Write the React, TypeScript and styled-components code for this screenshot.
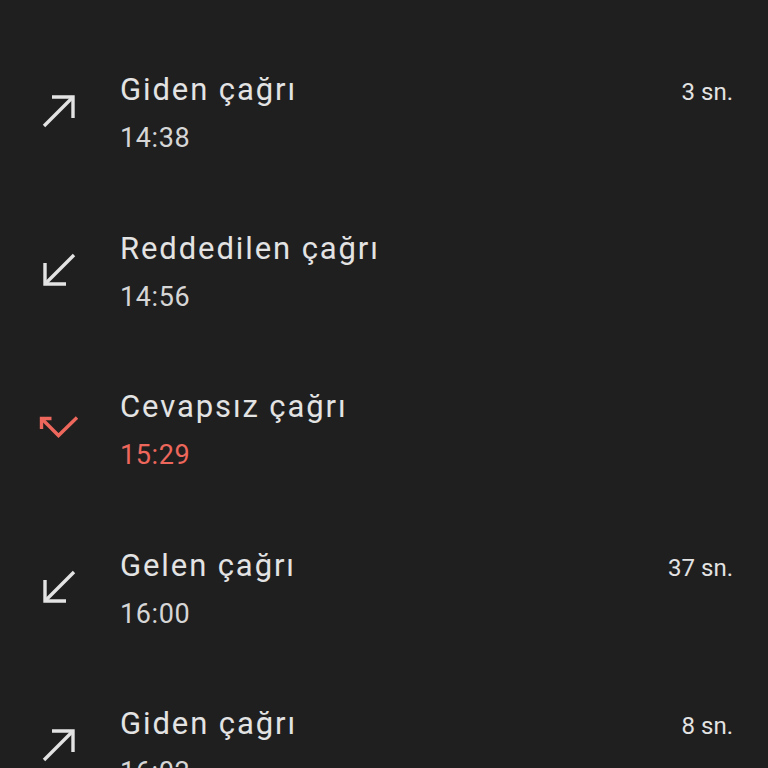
import styled, { createGlobalStyle } from "styled-components";

const GlobalStyle = createGlobalStyle`
  html, body {
    margin: 0;
    padding: 0;
    background: #1f1f1f;
  }
  body {
    font-family: Roboto, "Noto Sans", sans-serif;
    color: #e3e3e3;
    overflow: hidden;
  }
`;

type Kind = "out" | "in" | "missed";

type Call = {
  kind: Kind;
  title: string;
  time: string;
  duration?: string;
};

const calls: Call[] = [
  { kind: "out", title: "Giden çağrı", time: "14:38", duration: "3 sn." },
  { kind: "in", title: "Reddedilen çağrı", time: "14:56" },
  { kind: "missed", title: "Cevapsız çağrı", time: "15:29" },
  { kind: "in", title: "Gelen çağrı", time: "16:00", duration: "37 sn." },
  { kind: "out", title: "Giden çağrı", time: "16:02", duration: "8 sn." },
];

const CallIcon = ({ kind }: { kind: Kind }) => {
  if (kind === "out") {
    return (
      <svg width="40" height="40" viewBox="0 0 40 40" fill="none" stroke="#e3e3e3" strokeWidth="3.4">
        <polyline points="13,6 34,6 34,27" strokeLinejoin="miter" />
        <line x1="34" y1="6" x2="5" y2="35" />
      </svg>
    );
  }
  if (kind === "in") {
    return (
      <svg width="40" height="40" viewBox="0 0 40 40" fill="none" stroke="#e3e3e3" strokeWidth="3.4">
        <polyline points="6,13 6,34 27,34" strokeLinejoin="miter" />
        <line x1="6" y1="34" x2="35" y2="5" />
      </svg>
    );
  }
  return (
    <svg width="40" height="40" viewBox="0 0 40 40" fill="none" stroke="#ee675c" strokeWidth="3.4">
      <polyline points="2.5,21 2.5,10.5 12.5,10.5" strokeLinejoin="miter" />
      <polyline points="2.5,10.5 19.5,27.5 38,9.5" strokeLinejoin="miter" />
    </svg>
  );
};

export default function App() {
  return (
    <>
      <GlobalStyle />
      <List>
        {calls.map((c, i) => (
          <Row key={i}>
            <IconSlot>
              <CallIcon kind={c.kind} />
            </IconSlot>
            <Texts>
              <Title>{c.title}</Title>
              <Time $missed={c.kind === "missed"}>{c.time}</Time>
            </Texts>
            {c.duration && <Duration>{c.duration}</Duration>}
          </Row>
        ))}
      </List>
    </>
  );
}

const List = styled.div`
  display: flex;
  flex-direction: column;
  padding-top: 35px;
  height: 768px;
  box-sizing: border-box;
  overflow: hidden;
`;

const Row = styled.div`
  display: grid;
  grid-template-columns: 81px 1fr auto;
  align-items: center;
  height: 158.5px;
  flex-shrink: 0;
  padding-left: 39px;
  padding-right: 35px;
`;

const IconSlot = styled.div`
  width: 40px;
  height: 40px;
  margin-bottom: 6px;
`;

const Texts = styled.div`
  display: flex;
  flex-direction: column;
`;

const Title = styled.div`
  font-size: 31px;
  line-height: 48px;
  letter-spacing: 1.9px;
  color: #e3e3e3;
`;

const Time = styled.div<{ $missed?: boolean }>`
  font-size: 27px;
  line-height: 48px;
  letter-spacing: 0.6px;
  color: ${(p) => (p.$missed ? "#ee675c" : "#d6d6d6")};
`;

const Duration = styled.div`
  align-self: start;
  margin-top: 33px;
  font-size: 24px;
  line-height: 48px;
  color: #e3e3e3;
`;
